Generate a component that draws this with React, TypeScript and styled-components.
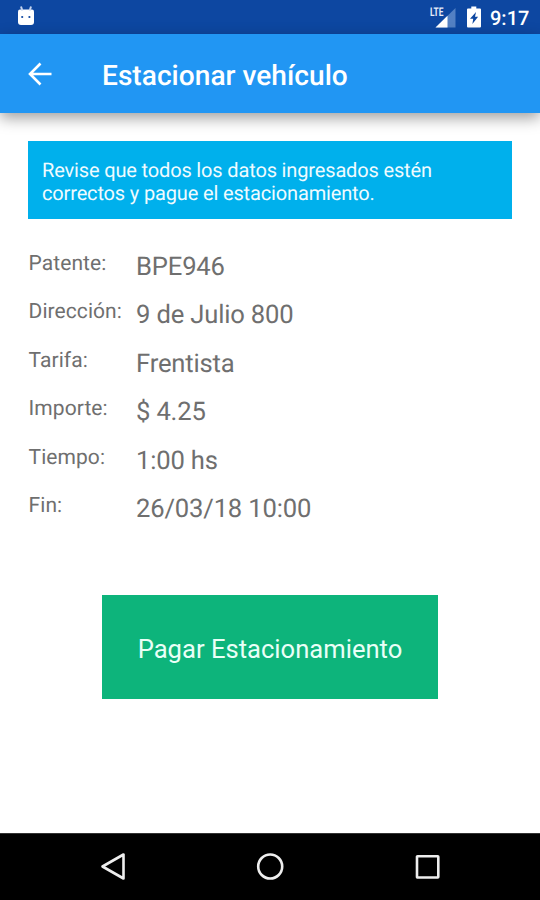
import React from "react";
import styled, { createGlobalStyle } from "styled-components";

const GlobalStyle = createGlobalStyle`
  * { box-sizing: border-box; }
  body { margin: 0; background: #fff; font-family: Roboto, "Noto Sans", sans-serif; text-rendering: geometricPrecision; }
`;
const Screen = styled.div`
  width: 540px; height: 900px; display: flex; flex-direction: column; background: #fff; overflow: hidden;
`;
const StatusBar = styled.div`
  height: 34px; flex: none; display: flex; align-items: flex-start; justify-content: space-between;
  padding: 0 11px 0 17px; background: #0d47a1; color: #fff;
`;
const StatusGroup = styled.div`display: flex; align-items: flex-start; gap: 9px;`;
const StatusIcon = styled.svg`display: block; flex: none; height: 34px;`;
const NetworkType = styled.text`font: 700 12px Roboto, sans-serif; fill: #e6edf9;`;
const Clock = styled.span`
  width: 39px; margin: 6px 0 0 -1px; font-size: 20px; font-weight: 500; line-height: 24px; white-space: nowrap;
`;
const AppBar = styled.header`
  height: 79px; flex: none; display: flex; align-items: center; padding-left: 28px;
  background: #2196f3; color: #fff; box-shadow: 0 5px 14px rgba(0,0,0,.38);
`;
const Title = styled.h1`
  margin: 4px 0 0 49px; font-size: 28.1px; line-height: 34px; font-weight: 500; white-space: nowrap;
  letter-spacing: .02px;
`;
const Content = styled.main`flex: 1; display: flex; flex-direction: column; padding: 28px 28px 0;`;
const Notice = styled.p`
  margin: 0; height: 78px; padding: 18px 14px 0; background: #00b0ec; color: #effbff;
  font-size: 20px; line-height: 23px; letter-spacing: -.15px; white-space: nowrap;
`;
const Details = styled.dl`margin: 28.5px 0 -.5px; display: grid; grid-auto-rows: 48.5px;`;
const Row = styled.div`display: flex; color: #6f6f6f;`;
const Label = styled.dt`
  width: 108px; padding-left: .6px; font-size: 21px; line-height: 32px; letter-spacing: .06px; white-space: nowrap;
`;
const Value = styled.dd`margin: 0; font-size: 25.6px; line-height: 39px; letter-spacing: -.17px; white-space: nowrap;`;
const PayButton = styled.button`
  align-self: center; margin: 57px 0 0; width: 336px; height: 104px; border: 0; padding: 4px 0 0;
  background: #0db47b; color: #e9fff7; font: 400 25.6px/32px Roboto, sans-serif;
`;
const NavBar = styled.nav`
  height: 67px; flex: none; border-top: 1px solid #333; background: #000;
  display: flex; align-items: center; justify-content: center; gap: 127px;
`;
const NavIcon = styled.svg`
  width: 30px; height: 30px; fill: none; stroke: #eee; stroke-width: 2.6; stroke-linejoin: round;
`;

const details = [
  ["Patente:", "BPE946"],
  ["Dirección:", "9 de Julio 800"],
  ["Tarifa:", "Frentista"],
  ["Importe:", "$ 4.25"],
  ["Tiempo:", "1:00 hs"],
  ["Fin:", "26/03/18 10:00"],
];

function RobotIcon() {
  return (
    <StatusIcon width="18" viewBox="0 0 18 34" fill="#fff">
      <path d="M3 9.5h12q2 0 2 2V22q0 3-3 3H4q-3 0-3-3V11.5q0-2 2-2z" />
      <path d="M4 6.5L5.3 10.5M14 6.5l-1.3 4" stroke="#c5d4ee" strokeWidth="2" />
      <circle cx="5.2" cy="17" r="1.1" fill="#0d47a1" />
      <circle cx="12.4" cy="17" r="1.1" fill="#0d47a1" />
    </StatusIcon>
  );
}

function SignalIcon() {
  return (
    <StatusIcon width="28" viewBox="0 0 28 34">
      <path d="M26.5 8v19.5H6.5z" fill="#5380c3" />
      <path d="M18.5 15.8v11.7h-12z" fill="#fff" />
      <NetworkType x="1" y="16.3" textLength="13.5" lengthAdjust="spacingAndGlyphs">LTE</NetworkType>
    </StatusIcon>
  );
}

function BatteryIcon() {
  return (
    <StatusIcon width="16" viewBox="0 0 16 34">
      <path d="M5.3 6.5h5v2H14q1 0 1 1v17q0 1-1 1H2q-1 0-1-1v-17q0-1 1-1h3.3z" fill="#fff" />
      <path d="M10 12L4 18.7h3.2l-.8 5.3 5.7-7.2H9z" fill="#0d47a1" />
    </StatusIcon>
  );
}

export default function App() {
  return (
    <Screen>
      <GlobalStyle />
      <StatusBar>
        <RobotIcon />
        <StatusGroup>
          <SignalIcon />
          <BatteryIcon />
          <Clock>9:17</Clock>
        </StatusGroup>
      </StatusBar>
      <AppBar>
        <svg width="25" height="24" viewBox="0 0 25 24" fill="none" stroke="#fff" strokeWidth="2.6">
          <path d="M23.5 12H3M12.5 1.5L2 12l10.5 10.5" />
        </svg>
        <Title>Estacionar vehículo</Title>
      </AppBar>
      <Content>
        <Notice>Revise que todos los datos ingresados estén<br />correctos y pague el estacionamiento.</Notice>
        <Details>
          {details.map(([label, value]) => (
            <Row key={label}><Label>{label}</Label><Value>{value}</Value></Row>
          ))}
        </Details>
        <PayButton>Pagar Estacionamiento</PayButton>
      </Content>
      <NavBar>
        <NavIcon viewBox="0 0 30 30"><path d="M25.5 2.5v24L4.5 14.5z" /></NavIcon>
        <NavIcon viewBox="0 0 30 30"><circle cx="15.2" cy="14.5" r="12" /></NavIcon>
        <NavIcon viewBox="0 0 30 30"><rect x="5" y="4.2" width="21.3" height="21.3" rx=".5" /></NavIcon>
      </NavBar>
    </Screen>
  );
}
